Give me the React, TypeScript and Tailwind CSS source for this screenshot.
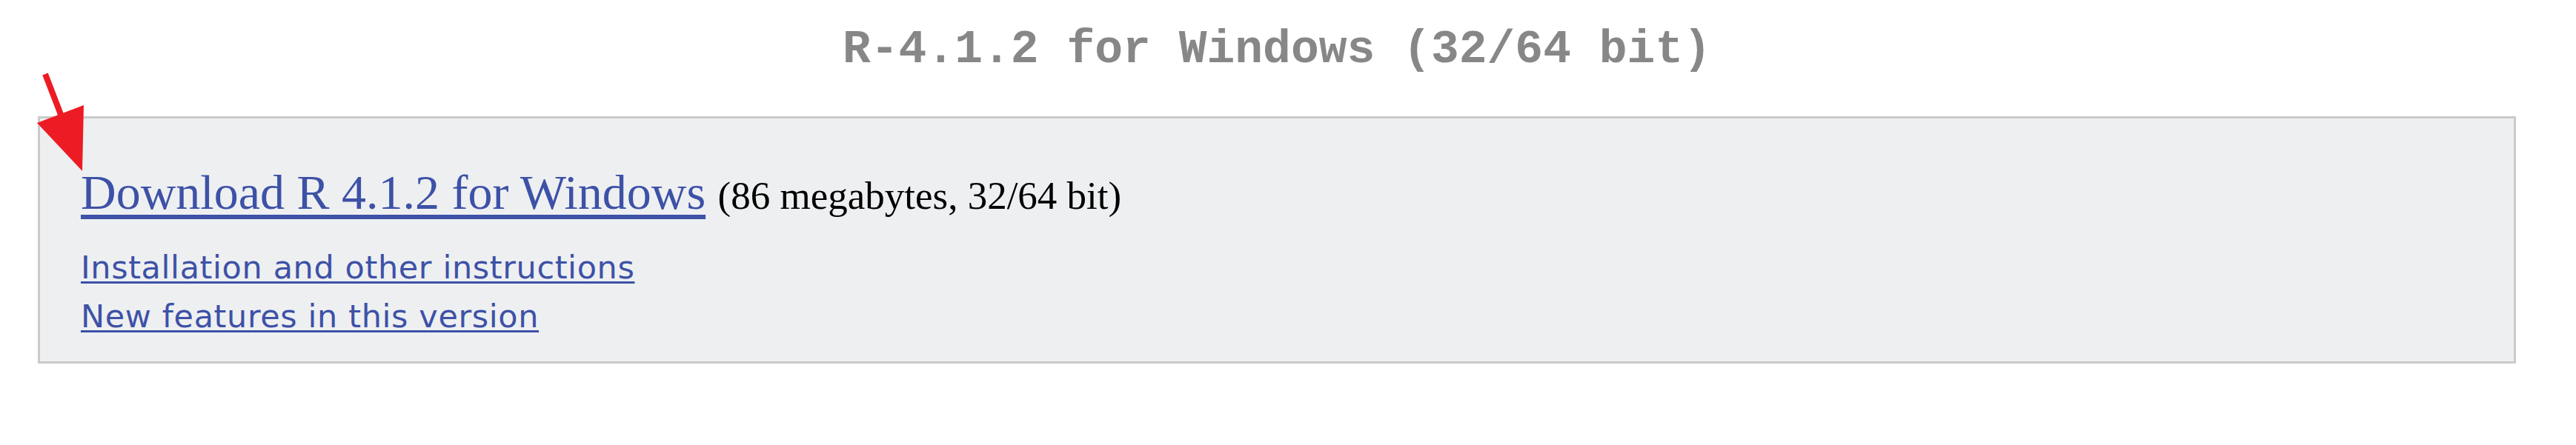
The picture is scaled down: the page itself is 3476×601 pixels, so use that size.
export default function App() {
  return (
    <div className="relative min-h-[601px] bg-white">
      <div className="ml-[51px] w-[3344px] pt-[36px]">
        <h2 className="text-center font-['Liberation_Mono',monospace] text-[63px] font-bold leading-[63px] text-[#878787]">
          R-4.1.2 for Windows (32/64 bit)
        </h2>

        <div className="mt-[58px] border-[3px] border-[#cacaca] bg-[#eeeff1] pl-[55px] pt-[62px] pb-[28px]">
          <p className="font-['Liberation_Serif',serif] text-[66px] leading-[75px] text-black">
            <a
              href="#"
              className="text-[#3d52a6] underline decoration-[6px] underline-offset-[8px]"
            >
              Download R 4.1.2 for Windows
            </a>{" "}
            <span className="text-[53px] leading-none">(86 megabytes, 32/64 bit)</span>
          </p>

          <div className="mt-[31px] font-['DejaVu_Sans',sans-serif] text-[43px] leading-[66px] tracking-[0.6px]">
            <div>
              <a
                href="#"
                className="text-[#3d52a6] underline decoration-[3px] underline-offset-[4px]"
              >
                Installation and other instructions
              </a>
            </div>
            <div>
              <a
                href="#"
                className="text-[#3d52a6] underline decoration-[3px] underline-offset-[4px]"
              >
                New features in this version
              </a>
            </div>
          </div>
        </div>
      </div>

      {/* red annotation arrow */}
      <svg
        className="absolute left-0 top-0"
        width="130"
        height="240"
        viewBox="0 0 130 240"
      >
        <line x1="61" y1="100" x2="86" y2="165" stroke="#ed1c24" strokeWidth="8" />
        <polygon points="50,166 113,142 111,231" fill="#ed1c24" />
      </svg>
    </div>
  );
}
